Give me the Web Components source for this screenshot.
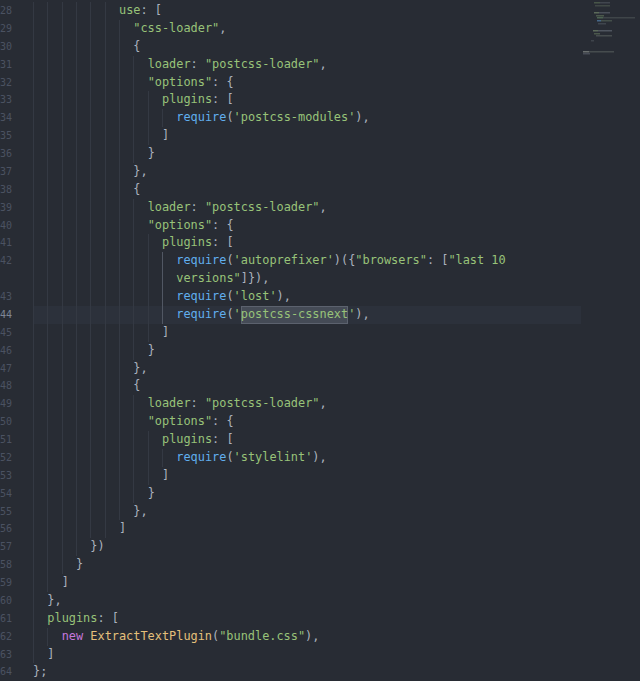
<!DOCTYPE html>
<html><head><meta charset="utf-8"><style>
html,body{margin:0;height:100%;background:#282c34;overflow:hidden}
</style></head><body>
<code-editor>
<code-line n="28" i="6"><c-t k="g">use</c-t>: [</code-line>
<code-line n="29" i="7"><c-t k="g">"css-loader"</c-t>,</code-line>
<code-line n="30" i="7">{</code-line>
<code-line n="31" i="8"><c-t k="g">loader</c-t>: <c-t k="g">"postcss-loader"</c-t>,</code-line>
<code-line n="32" i="8"><c-t k="g">"options"</c-t>: {</code-line>
<code-line n="33" i="9"><c-t k="g">plugins</c-t>: [</code-line>
<code-line n="34" i="10"><c-t k="b">require</c-t>(<c-t k="g">'postcss-modules'</c-t>),</code-line>
<code-line n="35" i="9">]</code-line>
<code-line n="36" i="8">}</code-line>
<code-line n="37" i="7">},</code-line>
<code-line n="38" i="7">{</code-line>
<code-line n="39" i="8"><c-t k="g">loader</c-t>: <c-t k="g">"postcss-loader"</c-t>,</code-line>
<code-line n="40" i="8"><c-t k="g">"options"</c-t>: {</code-line>
<code-line n="41" i="9"><c-t k="g">plugins</c-t>: [</code-line>
<code-line n="42" i="10" hl><c-t k="b">require</c-t>(<c-t k="g">'autoprefixer'</c-t>)({<c-t k="g">"browsers"</c-t>: [<c-t k="g">"last 10<br>versions"</c-t>]}),</code-line>
<code-line n="43" i="10" hl><c-t k="b">require</c-t>(<c-t k="g">'lost'</c-t>),</code-line>
<code-line n="44" i="10" hl active><c-t k="b">require</c-t>(<c-t k="g">'<c-t k="sel">postcss-cssnext</c-t>'</c-t>),</code-line>
<code-line n="45" i="9">]</code-line>
<code-line n="46" i="8">}</code-line>
<code-line n="47" i="7">},</code-line>
<code-line n="48" i="7">{</code-line>
<code-line n="49" i="8"><c-t k="g">loader</c-t>: <c-t k="g">"postcss-loader"</c-t>,</code-line>
<code-line n="50" i="8"><c-t k="g">"options"</c-t>: {</code-line>
<code-line n="51" i="9"><c-t k="g">plugins</c-t>: [</code-line>
<code-line n="52" i="10"><c-t k="b">require</c-t>(<c-t k="g">'stylelint'</c-t>),</code-line>
<code-line n="53" i="9">]</code-line>
<code-line n="54" i="8">}</code-line>
<code-line n="55" i="7">},</code-line>
<code-line n="56" i="6">]</code-line>
<code-line n="57" i="4">})</code-line>
<code-line n="58" i="3">}</code-line>
<code-line n="59" i="2">]</code-line>
<code-line n="60" i="1">},</code-line>
<code-line n="61" i="1"><c-t k="g">plugins</c-t>: [</code-line>
<code-line n="62" i="2"><c-t k="p">new</c-t> <c-t k="y">ExtractTextPlugin</c-t>(<c-t k="g">"bundle.css"</c-t>),</code-line>
<code-line n="63" i="1">]</code-line>
<code-line n="64" i="0">};</code-line>
</code-editor>
<script>
class CodeEditor extends HTMLElement{constructor(){super();this.attachShadow({mode:'open'}).innerHTML=`<style>
:host{display:flex;height:681px;box-sizing:border-box;padding-top:2px;font:11.9px/17.875px "DejaVu Sans Mono",monospace;color:#abb2bf;overflow:hidden}
.main{width:581px;flex:none}
code-minimap{flex:1}
</style><div class="main"><slot></slot></div><code-minimap></code-minimap>`}}
class CodeLine extends HTMLElement{constructor(){super();this.attachShadow({mode:'open'})}
connectedCallback(){
const i=+this.getAttribute('i'),S=14.33;
const layers=[];
if(this.hasAttribute('hl'))layers.push(`linear-gradient(#515763,#515763) ${9*S}px 0 / 1px 100% no-repeat`);
if(i>0)layers.push(`repeating-linear-gradient(to right,#343943 0 1px,transparent 1px ${S}px) 0 0 / ${i*S}px 100% no-repeat`);
this.shadowRoot.innerHTML=`<style>
:host{display:flex;white-space:pre}
.n{flex:none;width:12px;padding-right:21px;display:flex;justify-content:flex-end;color:#4b5261;font-size:10px}
:host([active]) .n{color:#7f8694}
.c{flex:1;min-width:0;padding-left:${i*S}px;background:${layers.join(',')||'none'}}
:host([active]) .c{background-color:#2c313b}
</style><div class="n">${this.getAttribute('n')}</div><div class="c"><slot></slot></div>`}}
class CT extends HTMLElement{constructor(){super();this.attachShadow({mode:'open'}).innerHTML=`<style>
:host{display:inline}
:host([k=g]){color:#98c379}
:host([k=b]){color:#61afef}
:host([k=p]){color:#c678dd}
:host([k=y]){color:#e5c07b}
:host([k=sel]){display:inline-block;background:#454b56;box-shadow:inset 0 0 0 1px #5c626e;color:#98c379}
</style><slot></slot>`}}
class CodeMinimap extends HTMLElement{constructor(){super();
const R=[[594,0,6,'#6f8a63',.45],[600,0,10,'#8a93a0',.25],[595,3,15,'#7a8a70',.3],[594,10,5,'#8fa880',.5],[599,10,11,'#8a93a0',.35],[596,13,8,'#7f9a70',.4],[597,15,6,'#6f9a70',.5],[603,15,32,'#7f8a80',.28],[597,18,4,'#5f9ad0',.55],[601,18,11,'#7f9a78',.32],[598,21,8,'#7f8a90',.28],[593,28,5,'#8fa880',.5],[598,28,14,'#8a93a0',.4],[594,31,6,'#7f9a70',.4],[596,33,16,'#7f8a80',.35],[591,38,3,'#7f8a90',.25],[583,49,6,'#a0a8a0',.55],[589,49,25,'#7f8a80',.35],[583,51,7,'#8a93a0',.32]];
const rects=R.map(([x,y,w,c,o])=>`<rect x="${x-581}" y="${y}" width="${w}" height="1.5" fill="${c}" opacity="${o}"/>`).join('');
this.attachShadow({mode:'open'}).innerHTML=`<style>:host{display:block}svg{display:block}</style><svg width="59" height="60" viewBox="0 0 59 60" aria-hidden="true">${rects}</svg>`}}
customElements.define('code-editor',CodeEditor);
customElements.define('code-line',CodeLine);
customElements.define('c-t',CT);
customElements.define('code-minimap',CodeMinimap);
</script>
</body></html>
